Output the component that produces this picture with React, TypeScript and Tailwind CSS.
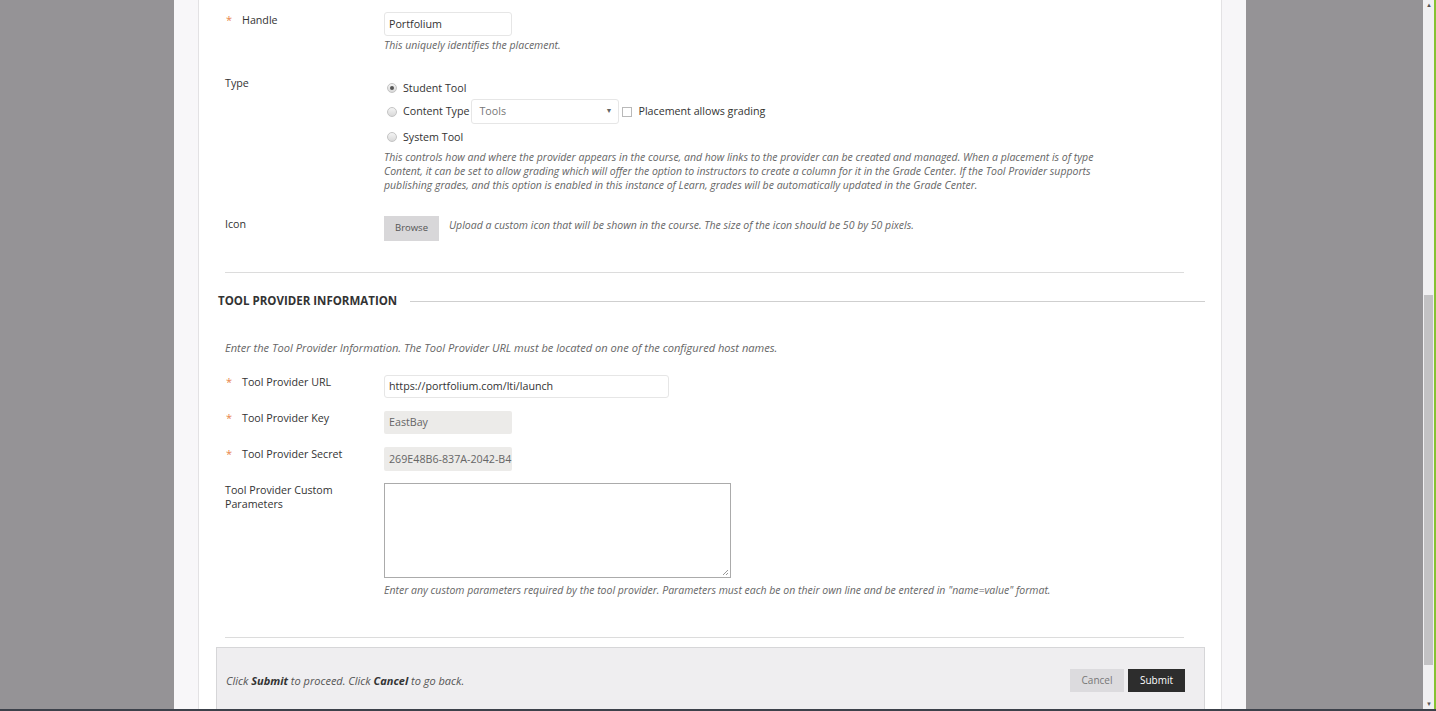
const font = { fontFamily: '"Open Sans", "Liberation Sans", sans-serif' };

const Star = () => (
  <span className="w-[17px] shrink-0 pl-[1px] text-[11px] text-[#e8844a]">*</span>
);

const Radio = ({ checked }: { checked?: boolean }) => (
  <span className="flex h-[10px] w-[10px] shrink-0 items-center justify-center rounded-full border border-[#c4c4c4] bg-gradient-to-b from-[#f4f4f4] to-[#d9d9d9]">
    {checked && <span className="h-[4px] w-[4px] rounded-full bg-[#555]" />}
  </span>
);

const Label = ({ text, required }: { text: string; required?: boolean }) => (
  <div className="flex w-[159px] shrink-0 text-[10.7px] leading-[16px] text-[#333]">
    {required ? <Star /> : null}
    <span>{text}</span>
  </div>
);

const Help = ({ children, className = "" }: { children: React.ReactNode; className?: string }) => (
  <p className={"text-[10.5px] italic leading-[14px] text-[#666] " + className}>{children}</p>
);

export default function App() {
  return (
    <div className="flex h-[711px] w-[1436px] flex-col overflow-hidden" style={font}>
      <div className="flex h-[709px] bg-[#959396]">
        <div className="w-[174px] shrink-0" />
        <div className="flex w-[1072px] shrink-0">
          <div className="w-[25px] shrink-0 border-r border-[#e3e2e4] bg-[#f8f7f9]" />
          <div className="flex-1 overflow-hidden bg-white pl-[17px]">
            <div className="flex w-[989px] flex-col">
              {/* Handle */}
              <div className="mt-[12px] flex pl-[9px]">
                <Label text="Handle" required />
                <div className="flex flex-col">
                  <div className="flex h-[24px] w-[128px] items-center rounded-[3px] border border-[#e6e6e6] px-[4px] text-[10.7px] text-[#333]">
                    Portfolium
                  </div>
                  <Help className="mt-[2px]">This uniquely identifies the placement.</Help>
                </div>
              </div>

              {/* Type */}
              <div className="mt-[23px] flex pl-[9px]">
                <Label text="Type" />
                <div className="flex flex-col pt-[5px] text-[10.7px] text-[#333]">
                  <div className="flex h-[16px] items-center gap-[6px] pl-[3px]">
                    <Radio checked />
                    <span>Student Tool</span>
                  </div>
                  <div className="mt-[3px] flex h-[25px] items-center pl-[3px]">
                    <Radio />
                    <span className="ml-[6px]">Content Type</span>
                    <div className="ml-[2px] flex h-[25px] w-[148px] items-center justify-between rounded-[3px] border border-[#e6e6e6] pl-[7px] pr-[6px] text-[#777]">
                      <span>Tools</span>
                      <span className="text-[7px] text-[#666]">▼</span>
                    </div>
                    <span className="ml-[3px] h-[10px] w-[10px] border border-[#b9b9b9] bg-white" />
                    <span className="ml-[6px]">Placement allows grading</span>
                  </div>
                  <div className="mt-[5px] flex h-[16px] items-center gap-[6px] pl-[3px]">
                    <Radio />
                    <span>System Tool</span>
                  </div>
                  <Help className="mt-[5px] w-[730px]">
                    This controls how and where the provider appears in the course, and how links to the provider can be created and managed. When a placement is of type Content, it can be set to allow grading which will offer the option to instructors to create a column for it in the Grade Center. If the Tool Provider supports publishing grades, and this option is enabled in this instance of Learn, grades will be automatically updated in the Grade Center.
                  </Help>
                </div>
              </div>

              {/* Icon */}
              <div className="mt-[24px] flex pl-[9px]">
                <Label text="Icon" />
                <div className="flex items-start">
                  <div className="flex h-[25px] w-[55px] items-center justify-center bg-[#d8d7d9] text-[9.5px] text-[#555]">
                    Browse
                  </div>
                  <Help className="ml-[10px] mt-[2px]">
                    Upload a custom icon that will be shown in the course. The size of the icon should be 50 by 50 pixels.
                  </Help>
                </div>
              </div>

              <div className="ml-[9px] mt-[31px] h-px w-[959px] bg-[#dcdcdc]" />

              {/* Section heading */}
              <div className="ml-[2px] mt-[20px] flex items-center">
                <h2 className="text-[11.5px] font-bold leading-[16px] text-[#333]">TOOL PROVIDER INFORMATION</h2>
                <div className="ml-[13px] h-px flex-1 bg-[#cfcfcf]" />
              </div>

              <p className="ml-[9px] mt-[32px] text-[11.1px] italic leading-[14px] text-[#666]">
                Enter the Tool Provider Information. The Tool Provider URL must be located on one of the configured host names.
              </p>

              {/* URL */}
              <div className="mt-[19px] flex pl-[9px]">
                <Label text="Tool Provider URL" required />
                <div className="mt-[1px] flex h-[23px] w-[285px] items-center rounded-[3px] border border-[#e6e6e6] px-[4px] text-[10.7px] text-[#333]">
                  https://portfolium.com/lti/launch
                </div>
              </div>

              <div className="mt-[12px] flex pl-[9px]">
                <Label text="Tool Provider Key" required />
                <div className="mt-[1px] flex h-[23px] w-[128px] items-center rounded-[2px] bg-[#ecebe9] px-[5px] text-[10.7px] text-[#666]">
                  EastBay
                </div>
              </div>

              <div className="mt-[12px] flex pl-[9px]">
                <Label text="Tool Provider Secret" required />
                <div className="mt-[1px] flex h-[24px] w-[128px] items-center overflow-hidden whitespace-nowrap rounded-[2px] bg-[#ecebe9] px-[5px] text-[10.7px] text-[#666]">
                  269E48B6-837A-2042-B4
                </div>
              </div>

              {/* Custom params */}
              <div className="mt-[12px] flex pl-[9px]">
                <div className="w-[159px] shrink-0 pr-[20px] text-[10.7px] leading-[14px] text-[#333]">
                  Tool Provider Custom Parameters
                </div>
                <div className="flex flex-col">
                  <div className="relative h-[95px] w-[347px] border border-[#ababab] bg-white">
                    <svg className="absolute bottom-[1px] right-[1px]" width="7" height="7" viewBox="0 0 7 7">
                      <path d="M6 1L1 6M6 4L4 6" stroke="#999" strokeWidth="1" />
                    </svg>
                  </div>
                  <Help className="mt-[5px] whitespace-nowrap">
                    Enter any custom parameters required by the tool provider. Parameters must each be on their own line and be entered in "name=value" format.
                  </Help>
                </div>
              </div>

              <div className="ml-[9px] mt-[40px] h-px w-[959px] bg-[#dcdcdc]" />

              {/* Submit bar */}
              <div className="mt-[9px] flex h-[70px] items-start justify-between border border-[#d6d6d8] bg-[#efeef0] pl-[9px] pr-[19px] pt-[21px]">
                <p className="mt-[4px] text-[11px] italic leading-[16px] text-[#555]">
                  Click <b className="text-[#333]">Submit</b> to proceed. Click <b className="text-[#333]">Cancel</b> to go back.
                </p>
                <div className="flex gap-[4px]">
                  <div className="flex h-[23px] w-[54px] items-center justify-center bg-[#dcdbde] text-[10px] text-[#777]">
                    Cancel
                  </div>
                  <div className="flex h-[23px] w-[57px] items-center justify-center bg-[#2d2d2d] text-[10px] text-white">
                    Submit
                  </div>
                </div>
              </div>
            </div>
          </div>
          <div className="w-[25px] shrink-0 border-l border-[#e3e2e4] bg-[#f7f6f8]" />
        </div>
        <div className="flex-1" />
        {/* scrollbar */}
        <div className="relative w-[11px] shrink-0 bg-[#f1f0f2]">
          <span className="absolute left-[3px] top-[2px] text-[6px] leading-none text-[#555]">▲</span>
          <div className="absolute left-[1px] right-[1px] top-[295px] h-[370px] bg-[#c3c2c4]" />
          <span className="absolute bottom-[2px] left-[3px] text-[6px] leading-none text-[#555]">▼</span>
        </div>
        <div className="w-[2px] shrink-0 bg-[#86c232]" />
      </div>
      <div className="h-[2px] bg-[#3c414a]" />
    </div>
  );
}
